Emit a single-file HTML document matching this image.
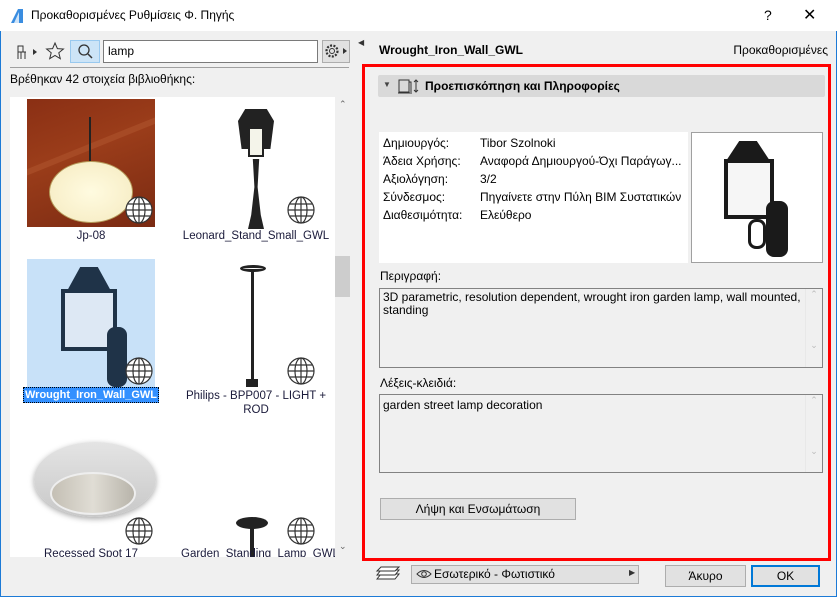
<!DOCTYPE html>
<html><head><meta charset="utf-8"><style>
*{margin:0;padding:0;box-sizing:border-box}
html,body{width:837px;height:597px;overflow:hidden}
body{background:#f0f0f0;font-family:"Segoe UI","Liberation Sans","DejaVu Sans",sans-serif;font-size:12px;color:#000;position:relative}
.a{position:absolute;white-space:nowrap}
.globe{position:absolute;width:28px;height:28px}
.lbl{position:absolute;font-size:11.5px;text-align:center;width:150px;color:#1a1a3a}
.ta{position:absolute;border:1px solid #828282;background:#f0f0f0;overflow:hidden}
.ta .sb{position:absolute;right:0;top:0;bottom:0;width:17px;border-left:1px solid #e8e8e8;color:#bbb;font-size:9px;text-align:center}
.btn{position:absolute;border:1px solid #adadad;background:#e1e1e1;text-align:center;font-size:12px}
</style></head><body>
<div class="a" style="left:0;top:0;width:837px;height:597px;border:1px solid #1c7ad6;border-top:none"></div>
<div class="a" style="left:0;top:0;width:837px;height:31px;background:#fff"></div>
<svg class="a" style="left:9px;top:8px" width="16" height="16"><path d="M2 15 L9 1 L14 1 L14 15 Z" fill="#3a8de0"/><path d="M5 15 L10 4 L10 15Z" fill="#cfe4f8"/></svg>
<div class="a" style="left:31px;top:8px;font-size:12px">Προκαθορισμένες Ρυθμίσεις Φ. Πηγής</div>
<div class="a" style="left:764px;top:7px;font-size:14px">?</div>
<div class="a" style="left:803px;top:5px;font-size:16px">✕</div>
<svg class="a" style="left:15px;top:43px" width="24" height="18"><path d="M3 3 h5 v6 h-5z M3 9 h8 M3 9 v7 M10 9 v7 M6 9 v7" stroke="#333" fill="none"/><path d="M18 6 l4 3 l-4 3z" fill="#333"/></svg>
<svg class="a" style="left:45px;top:41px" width="20" height="20"><path d="M10 2 L12.4 7.6 L18.4 8 L13.8 11.8 L15.3 17.7 L10 14.5 L4.7 17.7 L6.2 11.8 L1.6 8 L7.6 7.6Z" stroke="#333" fill="none"/></svg>
<div class="a" style="left:70px;top:40px;width:30px;height:23px;background:#cce4f7;border:1px solid #99c9ef"></div>
<svg class="a" style="left:77px;top:43px" width="18" height="18"><circle cx="7" cy="7" r="5" stroke="#333" fill="none" stroke-width="1.3"/><path d="M11 11 L15 15" stroke="#333" stroke-width="1.5"/></svg>
<div class="a" style="left:103px;top:40px;width:215px;height:23px;background:#fff;border:1px solid #7a7a7a;padding:3px 0 0 4px">lamp</div>
<div class="a" style="left:322px;top:40px;width:28px;height:23px;background:#e1e1e1;border:1px solid #adadad"></div>
<svg class="a" style="left:324px;top:43px" width="26" height="18"><circle cx="8" cy="8" r="5.5" stroke="#333" fill="none" stroke-dasharray="2 1.4" stroke-width="2.2"/><circle cx="8" cy="8" r="2.5" stroke="#333" fill="none"/><path d="M19 5 l4 3 l-4 3z" fill="#333"/></svg>
<div class="a" style="left:10px;top:67px;width:339px;height:1px;background:#a0a0a0"></div>
<div class="a" style="left:10px;top:72px">Βρέθηκαν 42 στοιχεία βιβλιοθήκης:</div>
<div class="a" style="left:10px;top:97px;width:325px;height:460px;background:#fff;overflow:hidden">
 <div class="a" style="left:17px;top:2px;width:128px;height:128px;background:linear-gradient(160deg,#8a2f14,#9b3d1a 40%,#7a2a12);overflow:hidden">
  <div class="a" style="left:-20px;top:40px;width:190px;height:6px;background:#a64a25;transform:rotate(-22deg)"></div>
  <div class="a" style="left:62px;top:18px;width:2px;height:50px;background:#222"></div>
  <div class="a" style="left:22px;top:62px;width:84px;height:62px;border-radius:50%;background:radial-gradient(#fffbe0,#f5eac0);border:1px solid #b59a5a"></div>
 </div>
 <div class="lbl" style="left:6px;top:133px">Jp-08</div>
 <div class="a" style="left:228px;top:12px;width:36px;height:40px;background:#222;clip-path:polygon(20% 0,80% 0,100% 30%,90% 100%,10% 100%,0 30%)"></div>
 <div class="a" style="left:238px;top:30px;width:16px;height:30px;background:#f4f4ea;border:2px solid #222"></div>
 <div class="a" style="left:238px;top:62px;width:16px;height:70px;background:#222;clip-path:polygon(30% 0,70% 0,60% 40%,80% 80%,100% 100%,0 100%,20% 80%,40% 40%)"></div>
 <div class="lbl" style="left:171px;top:133px">Leonard_Stand_Small_GWL</div>
 <div class="a" style="left:17px;top:162px;width:128px;height:128px;background:#c8e1f8;overflow:hidden">
  <div class="a" style="left:40px;top:8px;width:44px;height:24px;background:#1f3348;clip-path:polygon(30% 0,70% 0,100% 100%,0 100%)"></div>
  <div class="a" style="left:34px;top:30px;width:56px;height:62px;background:#dde8f4;border:4px solid #1f3348"></div>
  <div class="a" style="left:80px;top:68px;width:20px;height:60px;background:#1f3348;border-radius:8px"></div>
 </div>
 <div class="a" style="left:13px;top:290px;width:136px;height:16px;background:#3390ff;border:1px dotted #000;color:#fff;font-weight:bold;text-align:center;font-size:11px;line-height:14px;overflow:hidden">Wrought_Iron_Wall_GWL</div>
 <div class="a" style="left:230px;top:168px;width:26px;height:7px;border:3px solid #222;border-radius:50%"></div>
 <div class="a" style="left:241px;top:175px;width:3px;height:110px;background:#222"></div>
 <div class="a" style="left:236px;top:282px;width:12px;height:8px;background:#222"></div>
 <div class="lbl" style="left:171px;top:292px;line-height:14px">Philips - BPP007 - LIGHT +<br>ROD</div>
 <div class="a" style="left:24px;top:345px;width:122px;height:75px;border-radius:50%;background:linear-gradient(#e4e4e4,#c8c8c8);box-shadow:0 2px 6px #aaa"></div>
 <div class="a" style="left:40px;top:375px;width:86px;height:43px;border-radius:50%;background:linear-gradient(90deg,#c4bfb4,#e0ddd5,#b8b4aa);border:2px solid #eee"></div>
 <div class="lbl" style="left:6px;top:451px">Recessed Spot 17</div>
 <div class="a" style="left:226px;top:420px;width:32px;height:12px;background:#222;border-radius:50%"></div>
 <div class="a" style="left:240px;top:428px;width:4px;height:100px;background:#222"></div>
 <div class="a" style="left:236px;top:512px;width:12px;height:21px;background:#222;border-radius:4px 4px 0 0"></div>
 <div class="lbl" style="left:171px;top:451px">Garden_Standing_Lamp_GWL</div>
</div>
<svg class="globe" style="left:125px;top:196px" viewBox="0 0 28 28"><g stroke="#333" fill="#fff" stroke-width="1.2"><circle cx="14" cy="14" r="13"/><ellipse cx="14" cy="14" rx="6" ry="13" fill="none"/><path d="M1 14h26M3 8h22M3 20h22M14 1v26" fill="none"/></g></svg>
<svg class="globe" style="left:287px;top:196px" viewBox="0 0 28 28"><g stroke="#333" fill="#fff" stroke-width="1.2"><circle cx="14" cy="14" r="13"/><ellipse cx="14" cy="14" rx="6" ry="13" fill="none"/><path d="M1 14h26M3 8h22M3 20h22M14 1v26" fill="none"/></g></svg>
<svg class="globe" style="left:125px;top:357px" viewBox="0 0 28 28"><g stroke="#333" fill="#fff" stroke-width="1.2"><circle cx="14" cy="14" r="13"/><ellipse cx="14" cy="14" rx="6" ry="13" fill="none"/><path d="M1 14h26M3 8h22M3 20h22M14 1v26" fill="none"/></g></svg>
<svg class="globe" style="left:287px;top:357px" viewBox="0 0 28 28"><g stroke="#333" fill="#fff" stroke-width="1.2"><circle cx="14" cy="14" r="13"/><ellipse cx="14" cy="14" rx="6" ry="13" fill="none"/><path d="M1 14h26M3 8h22M3 20h22M14 1v26" fill="none"/></g></svg>
<svg class="globe" style="left:125px;top:517px" viewBox="0 0 28 28"><g stroke="#333" fill="#fff" stroke-width="1.2"><circle cx="14" cy="14" r="13"/><ellipse cx="14" cy="14" rx="6" ry="13" fill="none"/><path d="M1 14h26M3 8h22M3 20h22M14 1v26" fill="none"/></g></svg>
<svg class="globe" style="left:287px;top:517px" viewBox="0 0 28 28"><g stroke="#333" fill="#fff" stroke-width="1.2"><circle cx="14" cy="14" r="13"/><ellipse cx="14" cy="14" rx="6" ry="13" fill="none"/><path d="M1 14h26M3 8h22M3 20h22M14 1v26" fill="none"/></g></svg>
<div class="a" style="left:335px;top:97px;width:15px;height:460px;background:#f0f0f0"></div>
<div class="a" style="left:335px;top:256px;width:15px;height:41px;background:#cdcdcd"></div>
<div class="a" style="left:339px;top:99px;font-size:9px;color:#666">⌃</div>
<div class="a" style="left:339px;top:541px;font-size:9px;color:#666">⌄</div>
<div class="a" style="left:358px;top:38px;font-size:8px;color:#333">◀</div>
<div class="a" style="left:379px;top:43px;font-weight:bold">Wrought_Iron_Wall_GWL</div>
<div class="a" style="left:730px;top:43px;width:98px;text-align:right">Προκαθορισμένες</div>
<div class="a" style="left:362px;top:64px;width:469px;height:497px;border:3px solid #f00"></div>
<div class="a" style="left:378px;top:75px;width:447px;height:22px;background:#d9d9d9;border-radius:2px"></div>
<div class="a" style="left:383px;top:80px;font-size:8px;color:#444">▼</div>
<svg class="a" style="left:397px;top:78px" width="24" height="17"><rect x="2" y="2" width="10" height="12" stroke="#333" fill="none"/><path d="M1 15 h14 M12 4 h2 v10" stroke="#333" fill="none"/><path d="M19 2 v12 M17 4 l2-2 2 2 M17 12 l2 2 2-2" stroke="#333" fill="none"/></svg>
<div class="a" style="left:425px;top:79px;font-weight:bold">Προεπισκόπηση και Πληροφορίες</div>
<div class="a" style="left:379px;top:132px;width:309px;height:131px;background:#fff"></div>
<div class="a" style="left:383px;top:134px;line-height:18px">Δημιουργός:<br>Άδεια Χρήσης:<br>Αξιολόγηση:<br>Σύνδεσμος:<br>Διαθεσιμότητα:</div>
<div class="a" style="left:480px;top:134px;line-height:18px">Tibor Szolnoki<br>Αναφορά Δημιουργού-Όχι Παράγωγ...<br>3/2<br>Πηγαίνετε στην Πύλη BIM Συστατικών<br>Ελεύθερο</div>
<div class="a" style="left:691px;top:132px;width:132px;height:131px;background:#fff;border:1px solid #a0a0a0;overflow:hidden">
 <div class="a" style="left:34px;top:8px;width:44px;height:20px;background:#1a1a1a;clip-path:polygon(30% 0,70% 0,100% 100%,0 100%)"></div>
 <div class="a" style="left:32px;top:26px;width:50px;height:60px;background:#f6f6f6;border:4px solid #1a1a1a"></div>
 <div class="a" style="left:74px;top:68px;width:22px;height:56px;background:#1a1a1a;border-radius:8px"></div>
 <div class="a" style="left:56px;top:86px;width:18px;height:30px;border:3px solid #1a1a1a;border-radius:8px"></div>
</div>
<div class="a" style="left:380px;top:269px">Περιγραφή:</div>
<div class="ta" style="left:379px;top:288px;width:444px;height:80px"><div class="a" style="left:3px;top:2px;line-height:13px;white-space:normal;width:420px">3D parametric, resolution dependent, wrought iron garden lamp, wall mounted, standing</div><div class="sb">⌃<br><br><br><br><br>⌄</div></div>
<div class="a" style="left:380px;top:376px">Λέξεις-κλειδιά:</div>
<div class="ta" style="left:379px;top:394px;width:444px;height:79px"><div class="a" style="left:3px;top:3px">garden street lamp decoration</div><div class="sb">⌃<br><br><br><br><br>⌄</div></div>
<div class="btn" style="left:380px;top:498px;width:196px;height:22px;padding-top:3px">Λήψη και Ενσωμάτωση</div>
<svg class="a" style="left:375px;top:566px" width="26" height="18"><g stroke="#333" fill="#fff"><path d="M2 13 l4-5 h18 l-4 5z"/><path d="M2 9 l4-5 h18 l-4 5z"/><path d="M2 5 l4-4 h18 l-4 4z"/></g></svg>
<div class="a" style="left:411px;top:565px;width:228px;height:19px;background:#e1e1e1;border:1px solid #adadad"></div>
<svg class="a" style="left:416px;top:569px" width="16" height="10"><path d="M1 5 Q8 -2 15 5 Q8 12 1 5z" stroke="#333" fill="none"/><circle cx="8" cy="5" r="2.3" stroke="#333" fill="none"/></svg>
<div class="a" style="left:434px;top:567px">Εσωτερικό - Φωτιστικό</div>
<div class="a" style="left:629px;top:568px;font-size:8px;color:#333">▶</div>
<div class="btn" style="left:665px;top:565px;width:81px;height:22px;padding-top:3px">Άκυρο</div>
<div class="btn" style="left:751px;top:565px;width:69px;height:22px;padding-top:2px;border:2px solid #0078d7">OK</div>
</body></html>
